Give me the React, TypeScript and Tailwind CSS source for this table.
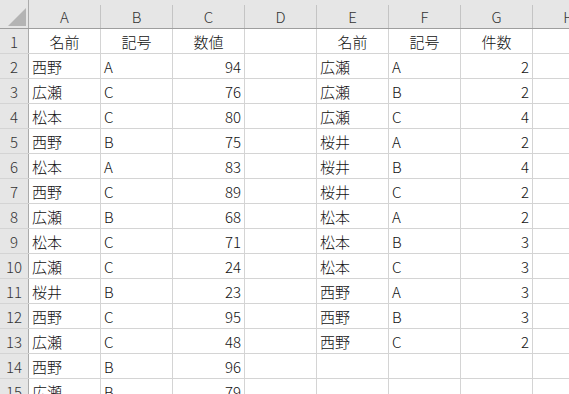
import React from 'react';

const cols = ['A', 'B', 'C', 'D', 'E', 'F', 'G', 'H'];

// 表のデータ (左: 元データ, 右: 集計)
const left: [string, string, string][] = [
  ['西野', 'A', '94'],
  ['広瀬', 'C', '76'],
  ['松本', 'C', '80'],
  ['西野', 'B', '75'],
  ['松本', 'A', '83'],
  ['西野', 'C', '89'],
  ['広瀬', 'B', '68'],
  ['松本', 'C', '71'],
  ['広瀬', 'C', '24'],
  ['桜井', 'B', '23'],
  ['西野', 'C', '95'],
  ['広瀬', 'C', '48'],
  ['西野', 'B', '96'],
  ['広瀬', 'B', '79'],
];

const right: [string, string, string][] = [
  ['広瀬', 'A', '2'],
  ['広瀬', 'B', '2'],
  ['広瀬', 'C', '4'],
  ['桜井', 'A', '2'],
  ['桜井', 'B', '4'],
  ['桜井', 'C', '2'],
  ['松本', 'A', '2'],
  ['松本', 'B', '3'],
  ['松本', 'C', '3'],
  ['西野', 'A', '3'],
  ['西野', 'B', '3'],
  ['西野', 'C', '2'],
];

type Align = 'left' | 'right' | 'center';

function Cell({ text = '', align = 'left' }: { text?: string; align?: Align }) {
  const a = align === 'right' ? 'justify-end pr-[3px]' : align === 'center' ? 'justify-center' : 'justify-start pl-[3px]';
  return (
    <div className={`w-[72px] flex-shrink-0 h-full flex items-center border-r border-[#d4d4d4] ${a}`}>
      {text}
    </div>
  );
}

export default function App() {
  const rows: { cells: { text: string; align: Align }[] }[] = [];

  rows.push({
    cells: [
      { text: '名前', align: 'center' },
      { text: '記号', align: 'center' },
      { text: '数値', align: 'center' },
      { text: '', align: 'left' },
      { text: '名前', align: 'center' },
      { text: '記号', align: 'center' },
      { text: '件数', align: 'center' },
      { text: '', align: 'left' },
    ],
  });

  for (let i = 0; i < 14; i++) {
    const l = left[i];
    const r = right[i];
    rows.push({
      cells: [
        { text: l[0], align: 'left' },
        { text: l[1], align: 'left' },
        { text: l[2], align: 'right' },
        { text: '', align: 'left' },
        { text: r ? r[0] : '', align: 'left' },
        { text: r ? r[1] : '', align: 'left' },
        { text: r ? r[2] : '', align: 'right' },
        { text: '', align: 'left' },
      ],
    });
  }

  return (
    <div
      className="w-[569px] h-[394px] overflow-hidden bg-white text-[15px] font-light text-[#111] leading-none"
      style={{ fontFamily: '"Noto Sans CJK JP", "Liberation Sans", sans-serif' }}
    >
      {/* 列見出し */}
      <div className="flex h-[29px] bg-[#e6e6e6] border-b border-[#9e9e9e]">
        <div className="w-[29px] flex-shrink-0 h-full border-r border-[#ababab] relative">
          <svg className="absolute left-[8px] top-[8px]" width="18" height="18" viewBox="0 0 18 18">
            <polygon points="18,0 18,18 0,18" fill="#b4b4b4" />
          </svg>
        </div>
        {cols.map(c => (
          <div key={c} className="w-[72px] flex-shrink-0 h-full flex items-end">
            <div className="w-full h-[23px] flex items-center justify-center border-r border-[#c4c4c4] text-[#333]">
              <span className="mb-[1px]">{c}</span>
            </div>
          </div>
        ))}
      </div>

      {/* 行 */}
      {rows.map((row, i) => (
        <div key={i} className="flex h-[25px] border-b border-[#d4d4d4]">
          <div className="w-[29px] flex-shrink-0 h-full flex items-center justify-center bg-[#e6e6e6] border-r border-[#ababab] text-[#333]">
            {i + 1}
          </div>
          {row.cells.map((c, j) => (
            <Cell key={j} text={c.text} align={c.align} />
          ))}
        </div>
      ))}
    </div>
  );
}
